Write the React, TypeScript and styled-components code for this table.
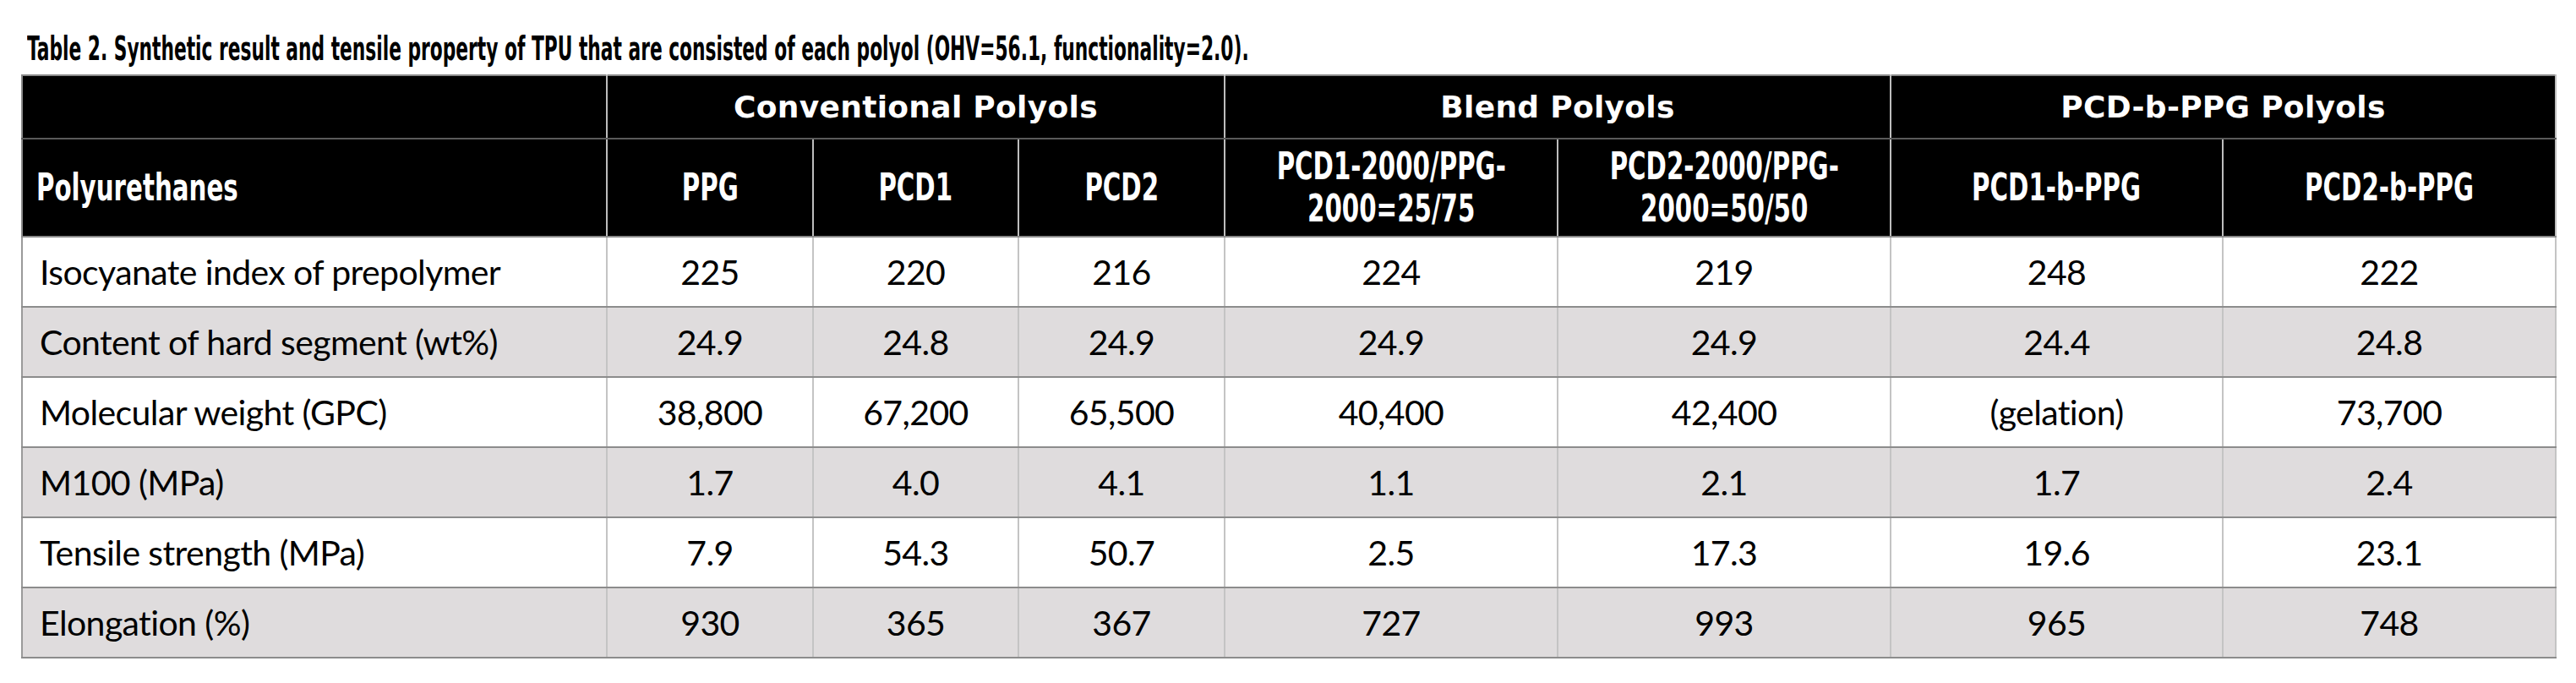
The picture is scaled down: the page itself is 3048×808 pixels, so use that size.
import React from "react";
import styled, { createGlobalStyle } from "styled-components";

const Global = createGlobalStyle`
  html, body { margin: 0; padding: 0; background: #ffffff; }
  body { font-family: "Lato", "Liberation Sans", sans-serif; color: #000; }
`;

const Page = styled.div`
  padding: 0 25px 0 25px;
  width: 2998px;
`;

const Caption = styled.div`
  height: 88px;
  display: flex;
  align-items: flex-end;
  padding-left: 7px;
  box-sizing: border-box;
  padding-bottom: 11px;
`;

const CaptionText = styled.span`
  display: inline-block;
  font-family: "DejaVu Sans Condensed", "DejaVu Sans", sans-serif;
  font-weight: 700;
  font-size: 39px;
  line-height: 1;
  white-space: nowrap;
  transform: scaleX(0.62);
  transform-origin: left center;
`;

const Table = styled.table`
  border-collapse: collapse;
  table-layout: fixed;
  width: 2998px;
`;

const HeadRow = styled.tr<{ $h: number }>`
  height: ${(p) => p.$h}px;
  background: #000;
`;

const BodyRow = styled.tr<{ $shade: boolean }>`
  height: 83px;
  background: ${(p) => (p.$shade ? "#dfdcdd" : "#ffffff")};
`;

const GroupHead = styled.th`
  color: #fff;
  font-family: "DejaVu Sans", "Liberation Sans", sans-serif;
  font-weight: 700;
  font-size: 36px;
  letter-spacing: 0.3px;
  text-align: center;
  padding: 0;
  border-top: 2px solid #8a8a8a;
  border-bottom: 2px solid #5a5a5a;
  border-left: 2px solid #8a8a8a;
  border-right: 2px solid #bdbdbd;
`;

const ColHead = styled.th<{ $left?: boolean }>`
  color: #fff;
  font-family: "DejaVu Sans Condensed", "DejaVu Sans", sans-serif;
  font-weight: 700;
  font-size: 44px;
  line-height: 50px;
  text-align: ${(p) => (p.$left ? "left" : "center")};
  padding: 0 0 0 ${(p) => (p.$left ? "16px" : "0")};
  border-bottom: 2px solid #8a8a8a;
  border-left: 2px solid #8a8a8a;
  border-right: 2px solid #bdbdbd;
`;

const Squeeze = styled.span`
  display: inline-block;
  transform: scaleX(0.74);
  transform-origin: center center;
`;

const SqueezeLeft = styled(Squeeze)`
  transform-origin: left center;
`;

const Cell = styled.td<{ $left?: boolean }>`
  font-family: "Lato", "Liberation Sans", sans-serif;
  font-weight: 400;
  font-size: 41px;
  letter-spacing: -0.6px;
  text-align: ${(p) => (p.$left ? "left" : "center")};
  padding: 0 0 0 ${(p) => (p.$left ? "20px" : "0")};
  white-space: nowrap;
  border-bottom: 2px solid #8c8c8c;
  border-left: 2px solid ${(p) => (p.$left ? "#9a9a9a" : "#cccccc")};
  border-right: 2px solid #c4c4c4;
`;

const widths = [692, 244, 243, 244, 394, 394, 393, 394];

const rows: string[][] = [
  ["Isocyanate index of prepolymer", "225", "220", "216", "224", "219", "248", "222"],
  ["Content of hard segment (wt%)", "24.9", "24.8", "24.9", "24.9", "24.9", "24.4", "24.8"],
  ["Molecular weight (GPC)", "38,800", "67,200", "65,500", "40,400", "42,400", "(gelation)", "73,700"],
  ["M100 (MPa)", "1.7", "4.0", "4.1", "1.1", "2.1", "1.7", "2.4"],
  ["Tensile strength (MPa)", "7.9", "54.3", "50.7", "2.5", "17.3", "19.6", "23.1"],
  ["Elongation (%)", "930", "365", "367", "727", "993", "965", "748"],
];

const colHeads: React.ReactNode[] = [
  "PPG",
  "PCD1",
  "PCD2",
  <>PCD1-2000/PPG-<br />2000=25/75</>,
  <>PCD2-2000/PPG-<br />2000=50/50</>,
  "PCD1-b-PPG",
  "PCD2-b-PPG",
];

export default function App() {
  return (
    <>
      <Global />
      <Page>
        <Caption>
          <CaptionText>
            Table 2. Synthetic result and tensile property of TPU that are consisted of each polyol (OHV=56.1, functionality=2.0).
          </CaptionText>
        </Caption>
        <Table>
          <colgroup>
            {widths.map((w, i) => (
              <col key={i} style={{ width: w }} />
            ))}
          </colgroup>
          <thead>
            <HeadRow $h={75}>
              <GroupHead />
              <GroupHead colSpan={3}>Conventional Polyols</GroupHead>
              <GroupHead colSpan={2}>Blend Polyols</GroupHead>
              <GroupHead colSpan={2}>PCD-b-PPG Polyols</GroupHead>
            </HeadRow>
            <HeadRow $h={116}>
              <ColHead $left>
                <SqueezeLeft>Polyurethanes</SqueezeLeft>
              </ColHead>
              {colHeads.map((h, i) => (
                <ColHead key={i}>
                  <Squeeze>{h}</Squeeze>
                </ColHead>
              ))}
            </HeadRow>
          </thead>
          <tbody>
            {rows.map((r, i) => (
              <BodyRow key={i} $shade={i % 2 === 1}>
                {r.map((v, j) => (
                  <Cell key={j} $left={j === 0}>
                    {v}
                  </Cell>
                ))}
              </BodyRow>
            ))}
          </tbody>
        </Table>
      </Page>
    </>
  );
}
